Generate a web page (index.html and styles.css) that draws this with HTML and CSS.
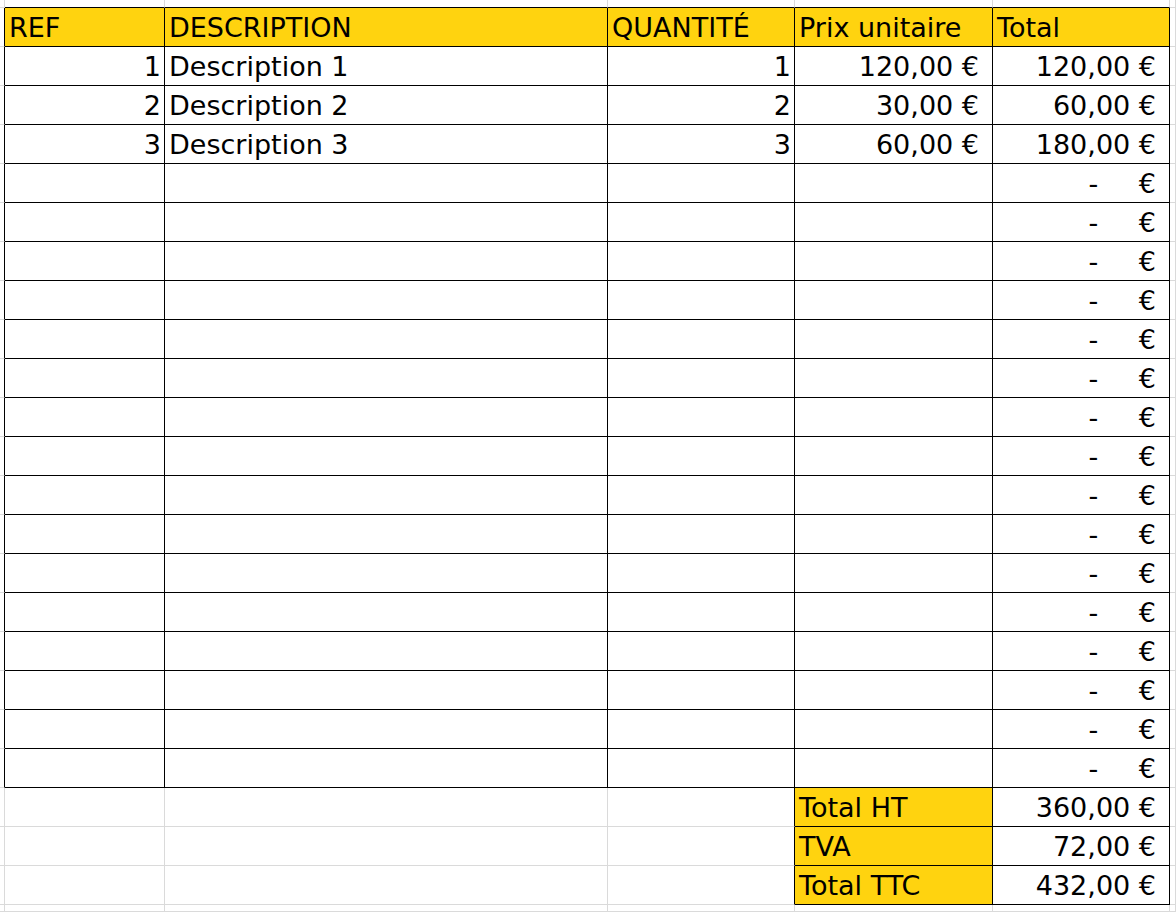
FILE: index.html
```html
<!DOCTYPE html>
<html lang="fr">

<head>
    <meta charset="UTF-8">
    <meta name="viewport" content="width=device-width, initial-scale=1.0">
    <title>Facture</title>
    <link rel="stylesheet" href="styles.css">
</head>

<body>
    <table class="sheet">
        <colgroup>
            <col class="w-edge">
            <col class="w-ref">
            <col class="w-desc">
            <col class="w-qty">
            <col class="w-prix">
            <col class="w-total">
            <col>
        </colgroup>
        <tr class="edge-row">
            <td></td><td class="bb"></td><td class="bb"></td><td class="bb"></td><td class="bb"></td><td class="bb"></td><td></td>
        </tr>
        <tr class="head">
            <td class="br"></td>
            <td class="cell hd">REF</td>
            <td class="cell hd">DESCRIPTION</td>
            <td class="cell hd">QUANTITÉ</td>
            <td class="cell hd">Prix unitaire</td>
            <td class="cell hd">Total</td>
            <td></td>
        </tr>
        <tr>
            <td class="br"></td>
            <td class="cell num">1</td>
            <td class="cell">Description 1</td>
            <td class="cell num">1</td>
            <td class="cell eur">120,00 €</td>
            <td class="cell eur">120,00 €</td>
            <td></td>
        </tr>
        <tr>
            <td class="br"></td>
            <td class="cell num">2</td>
            <td class="cell">Description 2</td>
            <td class="cell num">2</td>
            <td class="cell eur">30,00 €</td>
            <td class="cell eur">60,00 €</td>
            <td></td>
        </tr>
        <tr>
            <td class="br"></td>
            <td class="cell num">3</td>
            <td class="cell">Description 3</td>
            <td class="cell num">3</td>
            <td class="cell eur">60,00 €</td>
            <td class="cell eur">180,00 €</td>
            <td></td>
        </tr>
        <tr><td class="br"></td><td class="cell"></td><td class="cell"></td><td class="cell"></td><td class="cell"></td><td class="cell eur"><span class="dash">-</span> €</td><td></td></tr>
        <tr><td class="br"></td><td class="cell"></td><td class="cell"></td><td class="cell"></td><td class="cell"></td><td class="cell eur"><span class="dash">-</span> €</td><td></td></tr>
        <tr><td class="br"></td><td class="cell"></td><td class="cell"></td><td class="cell"></td><td class="cell"></td><td class="cell eur"><span class="dash">-</span> €</td><td></td></tr>
        <tr><td class="br"></td><td class="cell"></td><td class="cell"></td><td class="cell"></td><td class="cell"></td><td class="cell eur"><span class="dash">-</span> €</td><td></td></tr>
        <tr><td class="br"></td><td class="cell"></td><td class="cell"></td><td class="cell"></td><td class="cell"></td><td class="cell eur"><span class="dash">-</span> €</td><td></td></tr>
        <tr><td class="br"></td><td class="cell"></td><td class="cell"></td><td class="cell"></td><td class="cell"></td><td class="cell eur"><span class="dash">-</span> €</td><td></td></tr>
        <tr><td class="br"></td><td class="cell"></td><td class="cell"></td><td class="cell"></td><td class="cell"></td><td class="cell eur"><span class="dash">-</span> €</td><td></td></tr>
        <tr><td class="br"></td><td class="cell"></td><td class="cell"></td><td class="cell"></td><td class="cell"></td><td class="cell eur"><span class="dash">-</span> €</td><td></td></tr>
        <tr><td class="br"></td><td class="cell"></td><td class="cell"></td><td class="cell"></td><td class="cell"></td><td class="cell eur"><span class="dash">-</span> €</td><td></td></tr>
        <tr><td class="br"></td><td class="cell"></td><td class="cell"></td><td class="cell"></td><td class="cell"></td><td class="cell eur"><span class="dash">-</span> €</td><td></td></tr>
        <tr><td class="br"></td><td class="cell"></td><td class="cell"></td><td class="cell"></td><td class="cell"></td><td class="cell eur"><span class="dash">-</span> €</td><td></td></tr>
        <tr><td class="br"></td><td class="cell"></td><td class="cell"></td><td class="cell"></td><td class="cell"></td><td class="cell eur"><span class="dash">-</span> €</td><td></td></tr>
        <tr><td class="br"></td><td class="cell"></td><td class="cell"></td><td class="cell"></td><td class="cell"></td><td class="cell eur"><span class="dash">-</span> €</td><td></td></tr>
        <tr><td class="br"></td><td class="cell"></td><td class="cell"></td><td class="cell"></td><td class="cell"></td><td class="cell eur"><span class="dash">-</span> €</td><td></td></tr>
        <tr><td class="br"></td><td class="cell"></td><td class="cell"></td><td class="cell"></td><td class="cell"></td><td class="cell eur"><span class="dash">-</span> €</td><td></td></tr>
        <tr><td class="br"></td><td class="cell"></td><td class="cell"></td><td class="cell"></td><td class="cell"></td><td class="cell eur"><span class="dash">-</span> €</td><td></td></tr>
        <!-- totaux -->
        <tr>
            <td></td><td></td><td></td><td class="br"></td>
            <td class="cell hd">Total HT</td>
            <td class="cell eur">360,00 €</td>
            <td></td>
        </tr>
        <tr>
            <td></td><td></td><td></td><td class="br"></td>
            <td class="cell hd">TVA</td>
            <td class="cell eur">72,00 €</td>
            <td></td>
        </tr>
        <tr>
            <td></td><td></td><td></td><td class="br"></td>
            <td class="cell hd">Total TTC</td>
            <td class="cell eur">432,00 €</td>
            <td></td>
        </tr>
        <tr class="edge-row bottom">
            <td></td><td></td><td></td><td></td><td></td><td></td><td></td>
        </tr>
    </table>
</body>

</html>
```

FILE: styles.css
```css
body {
    margin: 0;
    background: #fff;
    font-family: "DejaVu Sans", sans-serif;
    font-size: 27px;
    color: #000;
}

.sheet {
    border-collapse: separate;
    border-spacing: 0;
    table-layout: fixed;
    width: 1176px;
}

.w-edge { width: 5px; }
.w-ref { width: 160px; }
.w-desc { width: 443px; }
.w-qty { width: 187px; }
.w-prix { width: 198px; }
.w-total { width: 177px; }

tr {
    height: 39px;
}

tr.edge-row {
    height: 8px;
}

tr.bottom {
    height: 7px;
}

td {
    border-right: 1px solid #dadada;
    border-bottom: 1px solid #dadada;
    padding: 0 3px 3px 4px;
    line-height: 31px;
    vertical-align: bottom;
    white-space: nowrap;
    overflow: hidden;
    text-align: left;
}

.edge-row td {
    padding: 0;
    line-height: 0;
}

/* bords noirs */
.cell,
.br {
    border-right-color: #000;
}

.cell,
.bb {
    border-bottom-color: #000;
}

.hd {
    background-color: #ffd30f;
}

.num {
    text-align: right;
}

.eur {
    text-align: right;
    padding-right: 13px;
}

.dash {
    margin-right: 32px;
}
```
